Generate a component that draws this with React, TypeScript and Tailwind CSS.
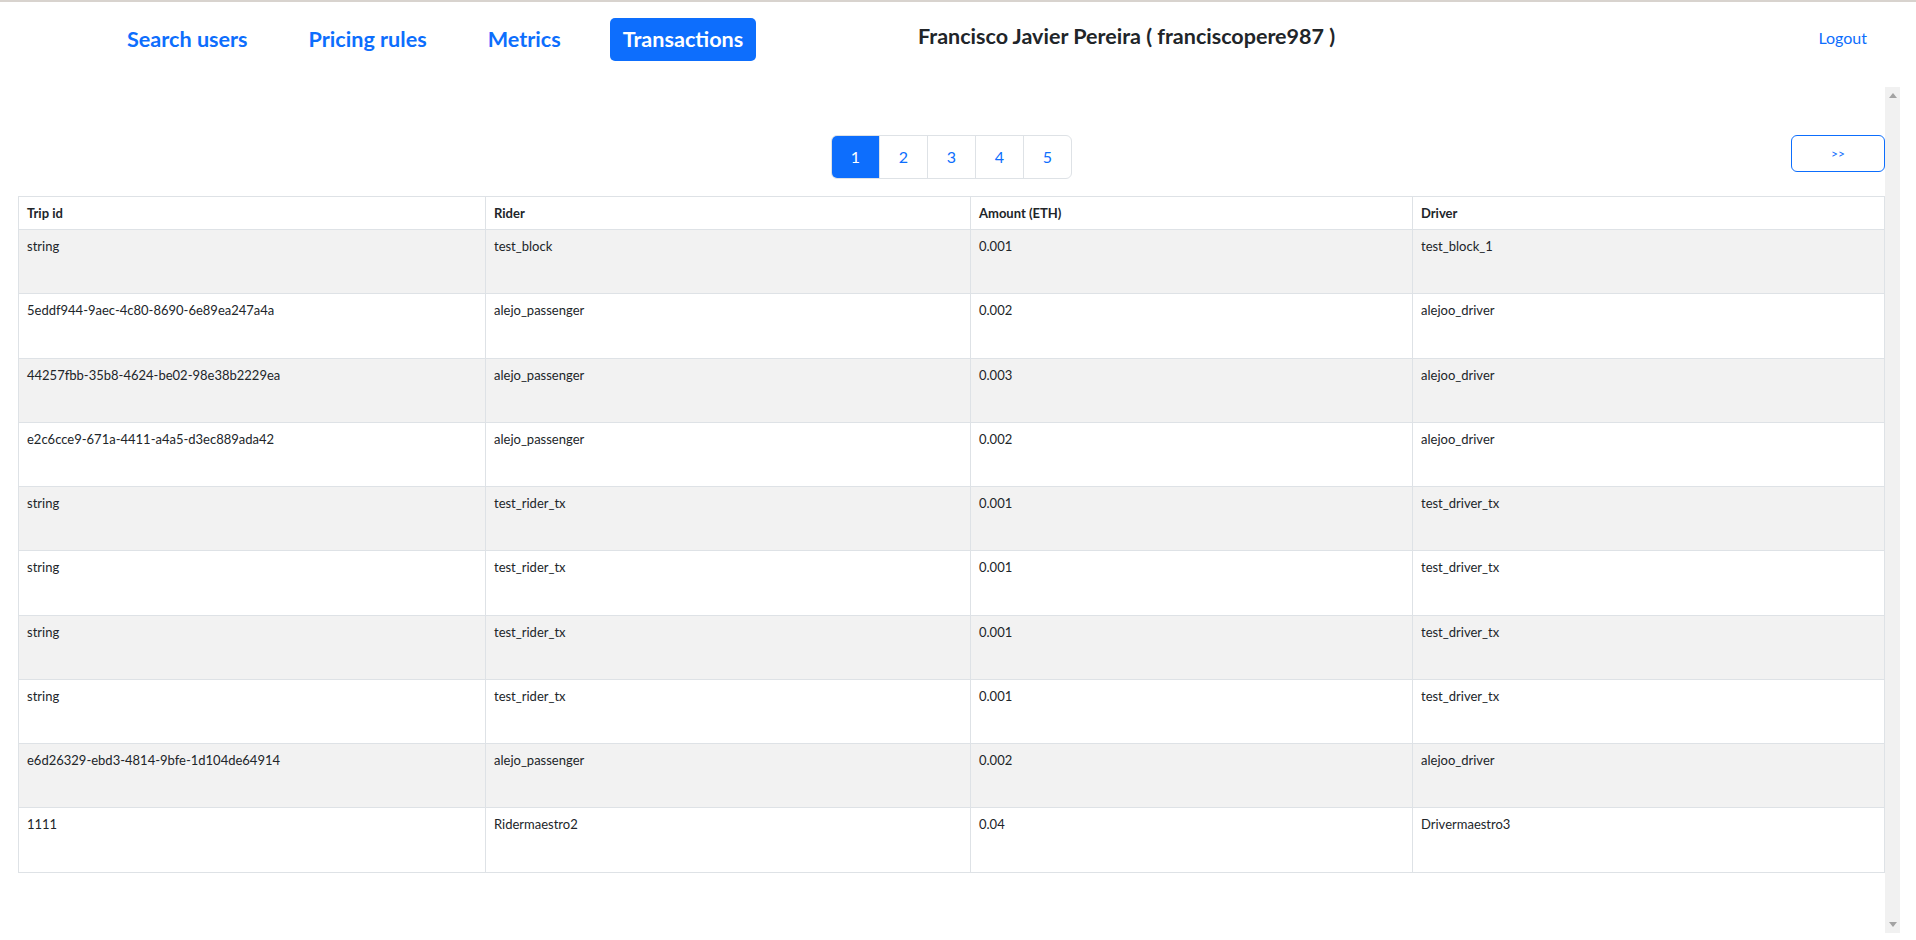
import React from "react";

const rows = [
  ["string", "test_block", "0.001", "test_block_1"],
  ["5eddf944-9aec-4c80-8690-6e89ea247a4a", "alejo_passenger", "0.002", "alejoo_driver"],
  ["44257fbb-35b8-4624-be02-98e38b2229ea", "alejo_passenger", "0.003", "alejoo_driver"],
  ["e2c6cce9-671a-4411-a4a5-d3ec889ada42", "alejo_passenger", "0.002", "alejoo_driver"],
  ["string", "test_rider_tx", "0.001", "test_driver_tx"],
  ["string", "test_rider_tx", "0.001", "test_driver_tx"],
  ["string", "test_rider_tx", "0.001", "test_driver_tx"],
  ["string", "test_rider_tx", "0.001", "test_driver_tx"],
  ["e6d26329-ebd3-4814-9bfe-1d104de64914", "alejo_passenger", "0.002", "alejoo_driver"],
  ["1111", "Ridermaestro2", "0.04", "Drivermaestro3"],
];

export default function App() {
  return (
    <div
      className="w-[1916px] h-[940px] bg-white text-[#212529] overflow-hidden flex flex-col"
      style={{ fontFamily: "Lato, 'Noto Sans', sans-serif" }}
    >
      <div className="h-[2px] bg-[#d8d3ce]" />
      <header className="h-[85px] flex items-start">
        <nav className="w-[918px] shrink-0 pl-[115px] mt-[16px] flex items-center gap-[37px]">
          <a className="px-3 h-[43px] flex items-center text-[21.6px] font-bold text-[#0d6efd]">Search users</a>
          <a className="px-3 h-[43px] flex items-center text-[21.6px] font-bold text-[#0d6efd]">Pricing rules</a>
          <a className="px-3 h-[43px] flex items-center text-[21.6px] font-bold text-[#0d6efd]">Metrics</a>
          <a className="px-[13px] h-[43px] flex items-center text-[21.6px] font-bold text-white bg-[#0d6efd] rounded-[5px]">Transactions</a>
        </nav>
        <div className="mt-[21px] text-[21.5px] font-bold leading-[26px] text-[#212529]">
          Francisco Javier Pereira ( franciscopere987 )
        </div>
        <a className="ml-auto mr-[49px] mt-[25px] text-[16px] leading-[22px] text-[#0d6efd]">Logout</a>
      </header>
      <div className="flex">
        <div className="w-[1885px] h-[846px] overflow-hidden">
          <div className="pl-[18px] pt-[48px]">
            <div className="grid grid-cols-3 items-start">
              <div />
              <div className="flex justify-center">
                <div className="flex h-[44px] border border-[#dee2e6] rounded-[6px] overflow-hidden">
                  <span className="w-[47px] flex items-center justify-center bg-[#0d6efd] text-white text-[16px]">1</span>
                  {["2", "3", "4", "5"].map((n) => (
                    <span
                      key={n}
                      className="w-[48px] flex items-center justify-center border-l border-[#dee2e6] text-[#0d6efd] text-[16px]"
                    >
                      {n}
                    </span>
                  ))}
                </div>
              </div>
              <div className="flex justify-end">
                <button className="w-[94px] h-[37px] border border-[#0d6efd] rounded-[6px] text-[#0d6efd] text-[12px] bg-white">
                  &gt;&gt;
                </button>
              </div>
            </div>
            <table className="mt-[17px] w-[1866px] table-fixed border-collapse border border-[#dee2e6] text-[13px]">
              <colgroup>
                <col className="w-[467px]" />
                <col className="w-[485px]" />
                <col className="w-[442px]" />
                <col className="w-[472px]" />
              </colgroup>
              <thead>
                <tr className="h-[33px]">
                  {["Trip id", "Rider", "Amount (ETH)", "Driver"].map((h) => (
                    <th
                      key={h}
                      className="border border-[#dee2e6] px-2 py-[7px] leading-[18px] text-left font-bold align-top"
                    >
                      {h}
                    </th>
                  ))}
                </tr>
              </thead>
              <tbody>
                {rows.map((r, i) => (
                  <tr key={i} className={`h-[64.25px] ${i % 2 === 0 ? "bg-[#f2f2f2]" : "bg-white"}`}>
                    {r.map((c, j) => (
                      <td key={j} className="border border-[#dee2e6] px-2 pt-[7px] leading-[18px] align-top text-[#212529]">
                        {c}
                      </td>
                    ))}
                  </tr>
                ))}
              </tbody>
            </table>
          </div>
        </div>
        <div className="w-[15px] h-[846px] bg-[#f1f1f1] flex flex-col items-center justify-between py-[6px]">
          <svg width="8" height="5" viewBox="0 0 8 5">
            <path d="M4 0 L8 5 L0 5 Z" fill="#a3a3a3" />
          </svg>
          <svg width="8" height="5" viewBox="0 0 8 5">
            <path d="M0 0 L8 0 L4 5 Z" fill="#a3a3a3" />
          </svg>
        </div>
      </div>
    </div>
  );
}
